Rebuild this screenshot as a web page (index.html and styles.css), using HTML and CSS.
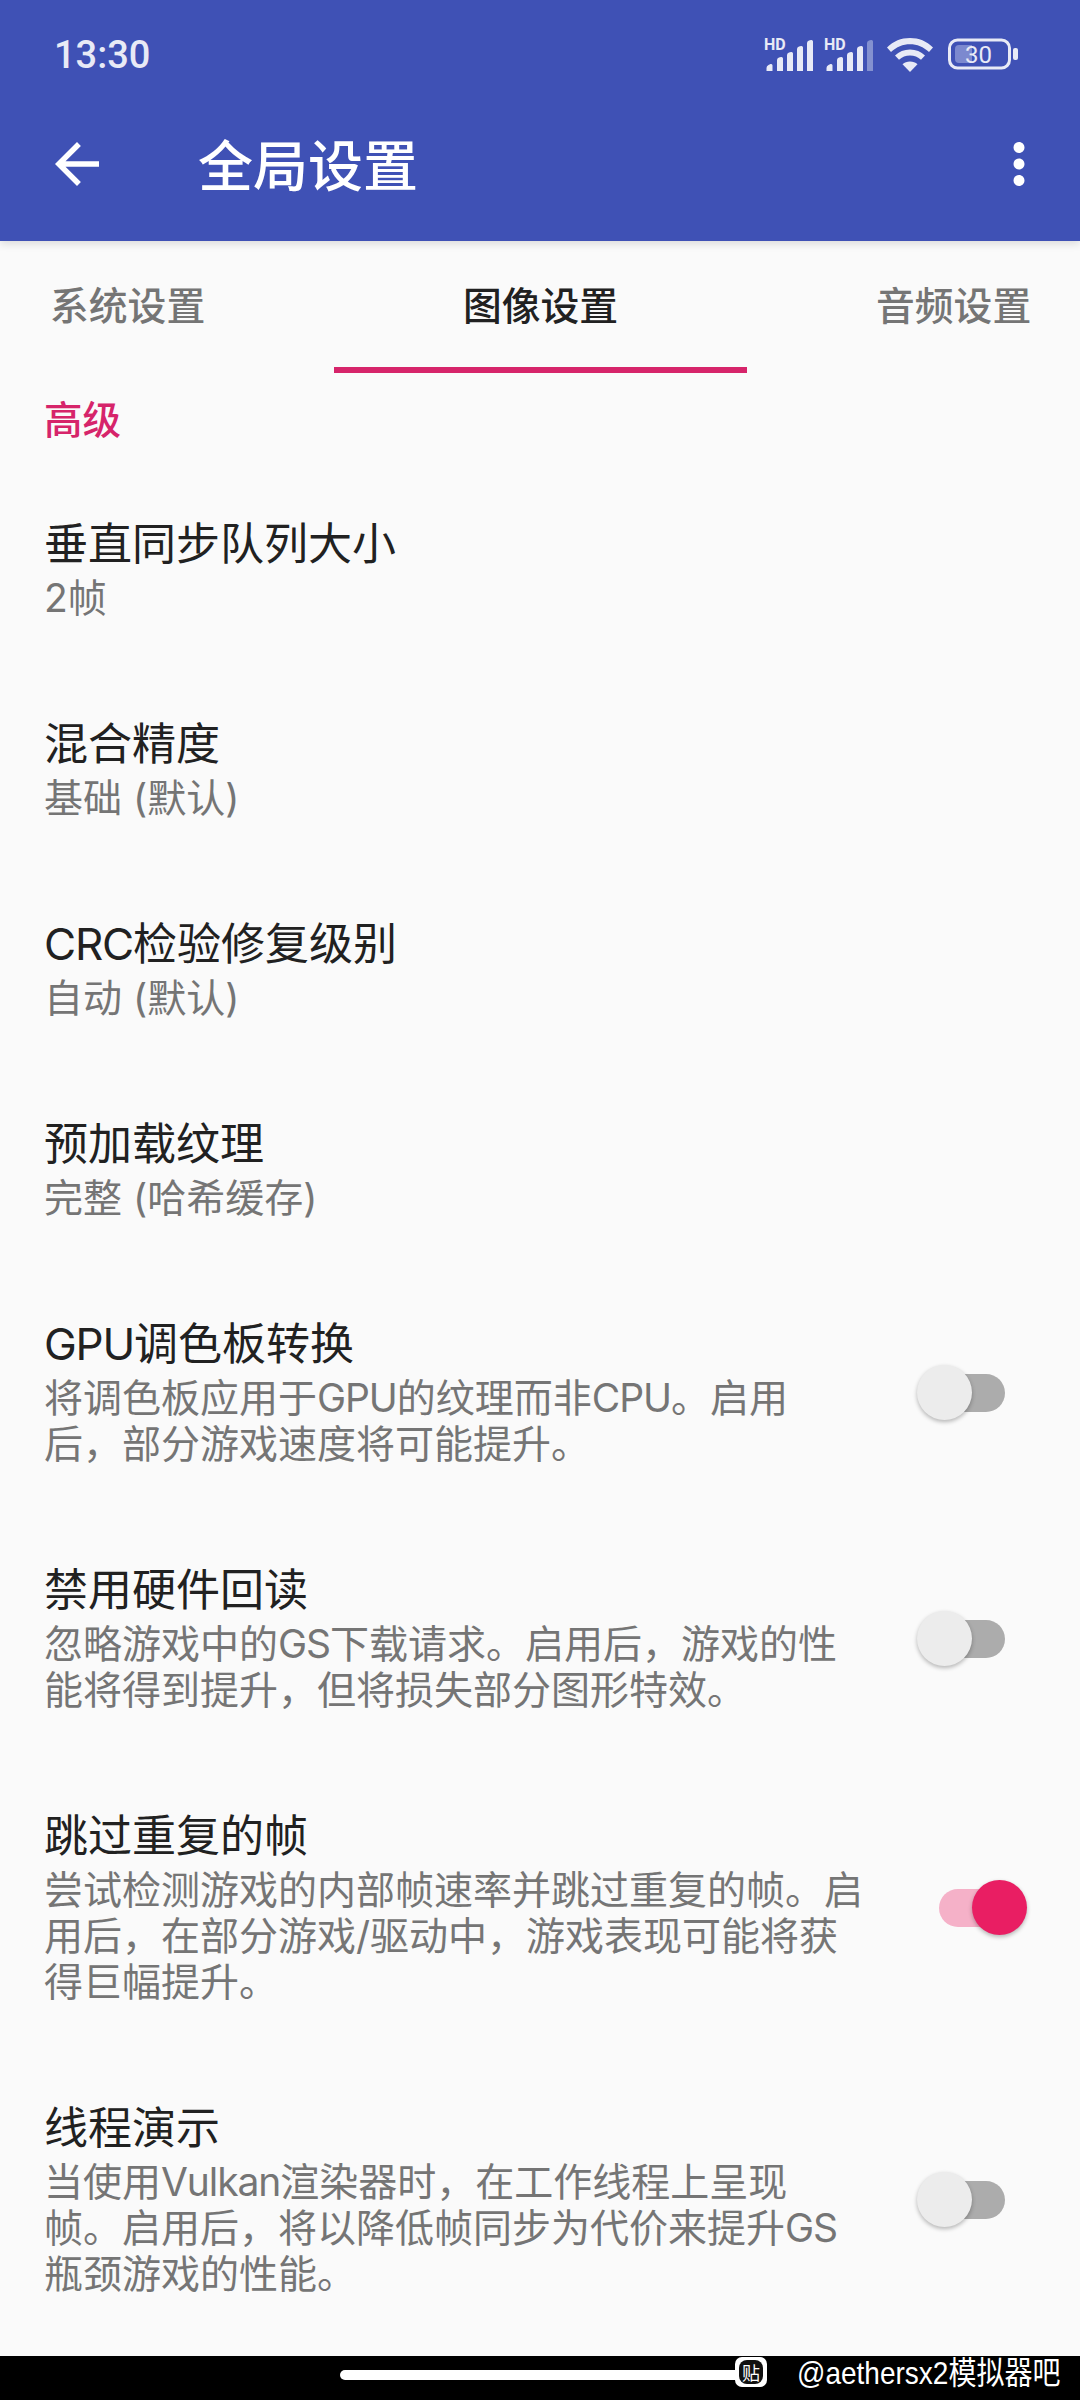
FILE: index.html
```html
<!DOCTYPE html>
<html lang="zh-CN">
<head>
<meta charset="utf-8">
<title>全局设置</title>
<link rel="stylesheet" href="styles.css">
</head>
<body>
<header class="appbar">
  <div class="status">
    <span class="time">13:30</span>
    <div class="status-icons">
      <svg class="signal" width="50" height="38" viewBox="0 -6 50 38"><text class="hd" x="0" y="11">HD</text><path d="M2.500 32v-3q0-2 2-3l2-1q2-.5 2 1.500V32zM13 32V21q0-2 2-2.500l2-.5q2-.3 2 1.500V32zM23 32V16q0-2 2-2.500l2-.5q2-.3 2 1.500V32zM33 32V10q0-2 2-2.500l2-.5q2-.3 2 1.500V32zM43 32V4q0-2 2-2.500l2-.5q2-.3 2 1.500V32z" fill="#e8eaf6"/></svg>
      <svg class="signal" width="50" height="38" viewBox="0 -6 50 38"><text class="hd" x="0" y="11">HD</text><path d="M2.500 32v-3q0-2 2-3l2-1q2-.5 2 1.500V32zM13 32V21q0-2 2-2.500l2-.5q2-.3 2 1.500V32zM23 32V16q0-2 2-2.500l2-.5q2-.3 2 1.500V32zM33 32V10q0-2 2-2.500l2-.5q2-.3 2 1.500V32z" fill="#e8eaf6"/><path d="M43 32V4q0-2 2-2.500l2-.5q2-.3 2 1.500V32z" fill="#8491d0"/></svg>
      <svg class="wifi" width="46" height="34" viewBox="0 0 46 34"><path d="M23 0C14 0 6.500 3 0 9.500l4 4.500C9.500 8.800 16 6.200 23 6.200S36.500 8.800 42 14l4-4.500C39.500 3 32 0 23 0z" fill="#e8eaf6"/><path d="M23 11.500c-6 0-11 2.100-15 6l4 4.300c3-2.800 6.800-4.300 11-4.300s8 1.500 11 4.300l4-4.300c-4-3.900-9-6-15-6z" fill="#e8eaf6"/><path d="M23 23.500c-3 0-5.500 1-7.500 2.800L23 34l7.500-7.700c-2-1.800-4.500-2.800-7.500-2.800z" fill="#e8eaf6"/></svg>
      <svg class="battery" width="70" height="32" viewBox="0 0 70 32"><rect x="1.500" y="2" width="60" height="28" rx="8" fill="none" stroke="#e8eaf6" stroke-width="3"/><path d="M11 7h13v18H11q-4 0-4-4V11q0-4 4-4z" fill="#7c89cf"/><text class="batt-num" x="17" y="25">30</text><rect x="65" y="10" width="5" height="12" rx="2" fill="#e8eaf6"/></svg>
    </div>
  </div>
  <div class="toolbar">
    <svg class="tool-icon" viewBox="0 0 24 24"><path d="M20 11H7.830l5.590-5.590L12 4l-8 8 8 8 1.410-1.410L7.830 13H20v-2z"/></svg>
    <h1 class="title">全局设置</h1>
    <svg class="tool-icon more" viewBox="0 0 24 24"><path d="M12 8c1.100 0 2-.9 2-2s-.9-2-2-2-2 .9-2 2 .9 2 2 2zm0 2c-1.100 0-2 .9-2 2s.9 2 2 2 2-.9 2-2-.9-2-2-2zm0 6c-1.100 0-2 .9-2 2s.9 2 2 2 2-.9 2-2-.9-2-2-2z"/></svg>
  </div>
</header>
<nav class="tabs">
  <div class="tab tab-first">系统设置</div>
  <div class="tab active">图像设置</div>
  <div class="tab tab-last">音频设置</div>
</nav>
<main class="list">
  <div class="section">高级</div>
  <div class="row"><div class="text"><div class="row-title">垂直同步队列大小</div><div class="row-sub">2帧</div></div></div>
  <div class="row"><div class="text"><div class="row-title">混合精度</div><div class="row-sub">基础 (默认)</div></div></div>
  <div class="row"><div class="text"><div class="row-title"><span class="lat">CRC</span>检验修复级别</div><div class="row-sub">自动 (默认)</div></div></div>
  <div class="row"><div class="text"><div class="row-title">预加载纹理</div><div class="row-sub">完整 (哈希缓存)</div></div></div>
  <div class="row"><div class="text"><div class="row-title"><span class="lat">GPU</span>调色板转换</div><div class="row-sub">将调色板应用于<span class="lat">GPU</span>的纹理而非<span class="lat">CPU</span>。启用<br>后，部分游戏速度将可能提升。</div></div><div class="switch"><span class="track"></span><span class="thumb"></span></div></div>
  <div class="row"><div class="text"><div class="row-title">禁用硬件回读</div><div class="row-sub">忽略游戏中的<span class="lat">GS</span>下载请求。启用后，游戏的性<br>能将得到提升，但将损失部分图形特效。</div></div><div class="switch"><span class="track"></span><span class="thumb"></span></div></div>
  <div class="row"><div class="text"><div class="row-title">跳过重复的帧</div><div class="row-sub">尝试检测游戏的内部帧速率并跳过重复的帧。启<br>用后，在部分游戏/驱动中，游戏表现可能将获<br>得巨幅提升。</div></div><div class="switch on"><span class="track"></span><span class="thumb"></span></div></div>
  <div class="row"><div class="text"><div class="row-title">线程演示</div><div class="row-sub">当使用<span class="lat">Vulkan</span>渲染器时，在工作线程上呈现<br>帧。启用后，将以降低帧同步为代价来提升<span class="lat">GS</span><br>瓶颈游戏的性能。</div></div><div class="switch"><span class="track"></span><span class="thumb"></span></div></div>
</main>
<footer class="navbar">
  <span class="pill"></span>
  <span class="tieba"><span class="tieba-mark">贴</span></span>
  <span class="mark">@aethersx2模拟器吧</span>
</footer>
</body>
</html>
```
FILE: styles.css
```css
* { box-sizing: border-box; }
html, body { margin: 0; padding: 0; }
body {
  width: 1080px;
  height: 2400px;
  display: flex;
  flex-direction: column;
  overflow: hidden;
  background: #fafafa;
  font-family: Inter, "Noto Sans CJK SC", sans-serif;
}
.appbar {
  height: 241px;
  flex: none;
  background: #3f51b5;
  box-shadow: 0 3px 8px rgba(0, 0, 0, .12);
  position: relative;
  z-index: 1;
}
.status {
  height: 87px;
  display: flex;
  align-items: flex-start;
  justify-content: space-between;
  padding: 33px 62px 0 54px;
}
.time { font-size: 38px; line-height: 44px; color: #e8eaf6; font-family: Roboto, sans-serif; font-weight: 500; }
.status-icons { display: flex; align-items: flex-start; }
.signal { margin-right: 10px; }
.wifi { margin: 5px 15px 0 3px; }
.battery { margin-top: 5px; }
.hd { font: 700 16px Roboto, sans-serif; fill: #e8eaf6; }
.batt-num { font: 400 24px Roboto, sans-serif; fill: #e8eaf6; }
.toolbar { height: 154px; display: flex; align-items: center; padding: 0 28px 0 44px; }
.tool-icon { width: 66px; height: 66px; fill: #fff; flex: none; }
.title {
  margin: 0 0 0 88px;
  padding-top: 3px;
  flex: 1;
  font-size: 55px;
  line-height: 66px;
  font-weight: 500;
  color: #fff;
}
.tabs {
  height: 132px;
  flex: none;
  display: flex;
}
.tab {
  width: 413px;
  flex: none;
  display: flex;
  align-items: center;
  justify-content: center;
  padding-bottom: 2px;
  font-size: 38.8px;
  font-weight: 500;
  color: #757575;
  border-bottom: 6px solid transparent;
}
.tab-first { width: 334px; justify-content: flex-start; padding-left: 50px; }
.tab-last { width: 333px; justify-content: flex-start; padding-left: 129px; }
.tab.active { color: #212121; border-bottom-color: #d6246a; }
.list { flex: 1; min-height: 0; overflow: hidden; }
.section {
  padding: 24px 44px 23px;
  font-size: 38.5px;
  line-height: 46px;
  font-weight: 500;
  color: #d6246a;
}
.row {
  display: flex;
  align-items: center;
  justify-content: space-between;
  padding: 48px 53px 48px 44px;
}
.text { width: 830px; }
.row-title { padding-top: 1px; margin-bottom: -1px; font-size: 44px; line-height: 58px; color: #212121; }
.row-sub { padding-top: 3px; margin-bottom: -3px; font-size: 39px; line-height: 46px; color: #757575; }
.lat { letter-spacing: -.028em; }
.switch { position: relative; width: 110px; height: 55px; margin-top: 6px; flex: none; }
.track {
  position: absolute;
  left: 22px;
  right: 22px;
  top: 9px;
  height: 38px;
  border-radius: 19px;
  background: #acacac;
}
.thumb {
  position: absolute;
  left: 0;
  top: 0;
  width: 55px;
  height: 55px;
  border-radius: 50%;
  background: #ececec;
  box-shadow: 0 2px 4px rgba(0, 0, 0, .28);
}
.switch.on .track { background: #f5b1c8; }
.switch.on .thumb { left: 55px; background: #e91e63; }
.navbar {
  height: 44px;
  flex: none;
  background: #000;
  display: flex;
  align-items: flex-start;
  padding-left: 340px;
  position: relative;
}
.pill { width: 400px; height: 10px; margin-top: 14px; border-radius: 5px 0 0 5px; background: #fff; }
.tieba {
  width: 32px;
  height: 30px;
  margin-left: -5px;
  margin-top: 1px;
  border-radius: 7px;
  background: #fff;
  display: flex;
  align-items: center;
  justify-content: center;
}
.tieba-mark {
  width: 24px;
  height: 24px;
  border-radius: 8px;
  background: #111;
  color: #fff;
  font: 18px/24px "Noto Sans CJK SC", sans-serif;
  text-align: center;
}
.mark {
  margin-left: 30px;
  font: 28px/36px "Liberation Sans", "Noto Sans CJK SC", sans-serif;
  color: #fff;
  white-space: nowrap;
  transform: scaleY(1.12);
}
```
